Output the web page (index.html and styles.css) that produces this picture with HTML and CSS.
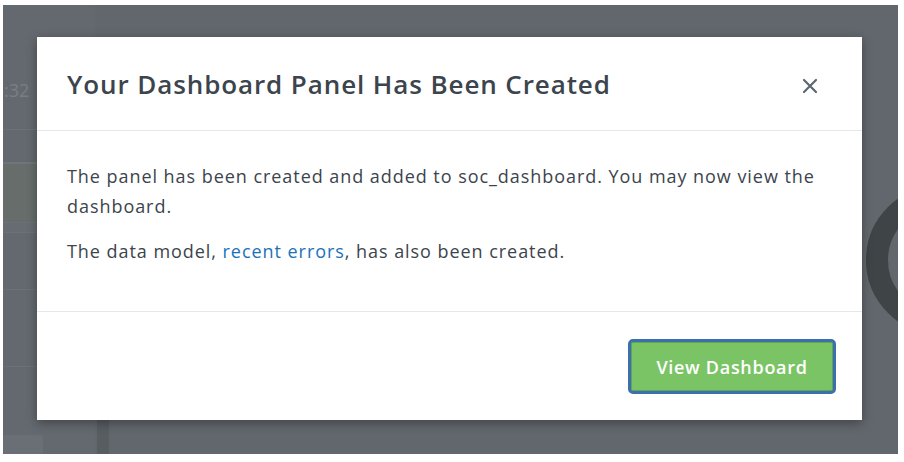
FILE: index.html
```html
<!DOCTYPE html>
<html lang="en">
<head>
<meta charset="utf-8">
<title>Your Dashboard Panel Has Been Created</title>
<link rel="stylesheet" href="styles.css">
</head>
<body>
<div class="screen">
  <div class="page">
    <div class="side">
      <div class="time">:32</div>
      <div class="row r1"></div>
      <div class="row r-green"></div>
      <div class="row r2"></div>
      <div class="row r3"></div>
      <div class="row r4"></div>
      <div class="row r5"></div>
      <div class="row-box"></div>
    </div>
    <div class="main">
      <div class="vbar"></div>
    </div>
    <div class="right">
      <div class="ring"></div>
    </div>
  </div>
  <div class="modal" role="dialog">
    <div class="modal-header">
      <h2 class="modal-title">Your Dashboard Panel Has Been Created</h2>
      <button class="close" aria-label="Close">
        <svg width="16" height="16" viewBox="0 0 16 16"><path d="M2 2 L14 14 M14 2 L2 14" stroke="#5c6773" stroke-width="2.2" stroke-linecap="round"/></svg>
      </button>
    </div>
    <div class="modal-body">
      <p>The panel has been created and added to soc_dashboard. You may now view the dashboard.</p>
      <p>The data model, <a href="#">recent errors</a>, has also been created.</p>
    </div>
    <div class="modal-footer">
      <button class="btn-primary">View Dashboard</button>
    </div>
  </div>
</div>
</body>
</html>
```
FILE: styles.css
```css
* { box-sizing: border-box; }
html, body { margin: 0; padding: 0; background: #ffffff; }
body {
  font-family: "Open Sans", "Liberation Sans", Arial, sans-serif;
  width: 904px;
  height: 462px;
  overflow: hidden;
}
.screen {
  position: relative;
  margin: 5px 6px 0 3px;
  width: 895px;
  height: 449px;
  overflow: hidden;
  background: #62676d;
}
.page {
  display: flex;
  height: 100%;
}
.side {
  width: 92px;
  display: flex;
  flex-direction: column;
  background: #64696f;
}
.time {
  height: 125px;
  padding-top: 73px;
  font-size: 18px;
  line-height: 24px;
  color: #7a7f85;
  padding-left: 1px;
}
.row { border-top: 1px solid #6b7176; flex: none; }
.r1 { height: 33px; }
.r-green { height: 60px; background: #666d6b; border-top: 2px solid #6f767b; }
.r2 { height: 10px; background: #676c72; }
.r3 { height: 57px; }
.r4 { height: 77px; }
.r5 { height: 63px; }
.row-box { margin-top: 6px; width: 40px; height: 20px; background: #6a6f75; border-radius: 2px; }
.main { flex: 1; display: flex; align-items: flex-end; }
.vbar { width: 12px; height: 36px; background: #585d62; margin-left: 2px; }
.right { width: 32px; position: relative; }
.ring {
  margin-top: 180px;
  width: 150px;
  height: 150px;
  border-radius: 50%;
  border: 22px solid #3f4546;
}
.modal {
  position: absolute;
  left: 34px;
  top: 32px;
  width: 825px;
  height: 383px;
  background: #ffffff;
  box-shadow: 0 3px 10px rgba(0,0,0,0.35);
  display: flex;
  flex-direction: column;
  color: #3c444d;
}
.modal-header {
  height: 94px;
  border-bottom: 1px solid #e5e8eb;
  display: flex;
  align-items: center;
  justify-content: space-between;
  padding: 0 44px 0 30px;
}
.modal-title {
  margin: 0;
  font-size: 26px;
  font-weight: 600;
  color: #3c444d;
  letter-spacing: 0.9px;
}
.close {
  border: 0;
  background: none;
  padding: 0;
  width: 16px;
  height: 16px;
  display: flex;
  margin-top: 4px;
}
.modal-body {
  height: 181px;
  border-bottom: 1px solid #e5e8eb;
  padding: 30px 30px 0 30px;
  font-size: 18px;
  line-height: 30px;
  letter-spacing: 0.95px;
}
.modal-body p { margin: 0 0 15px 0; }
.modal-body a { color: #1a73b7; text-decoration: none; }
.modal-footer {
  flex: 1;
  display: flex;
  justify-content: flex-end;
  align-items: flex-start;
  padding: 27px 26px 0 0;
}
.btn-primary {
  width: 208px;
  height: 55px;
  border: 3px solid #3b6fae;
  border-radius: 5px;
  background: #7ac466;
  color: #ffffff;
  font-family: inherit;
  font-size: 18px;
  font-weight: 600;
  letter-spacing: 0.7px;
  box-shadow: inset 0 0 0 1px #5fa84f;
}
```
